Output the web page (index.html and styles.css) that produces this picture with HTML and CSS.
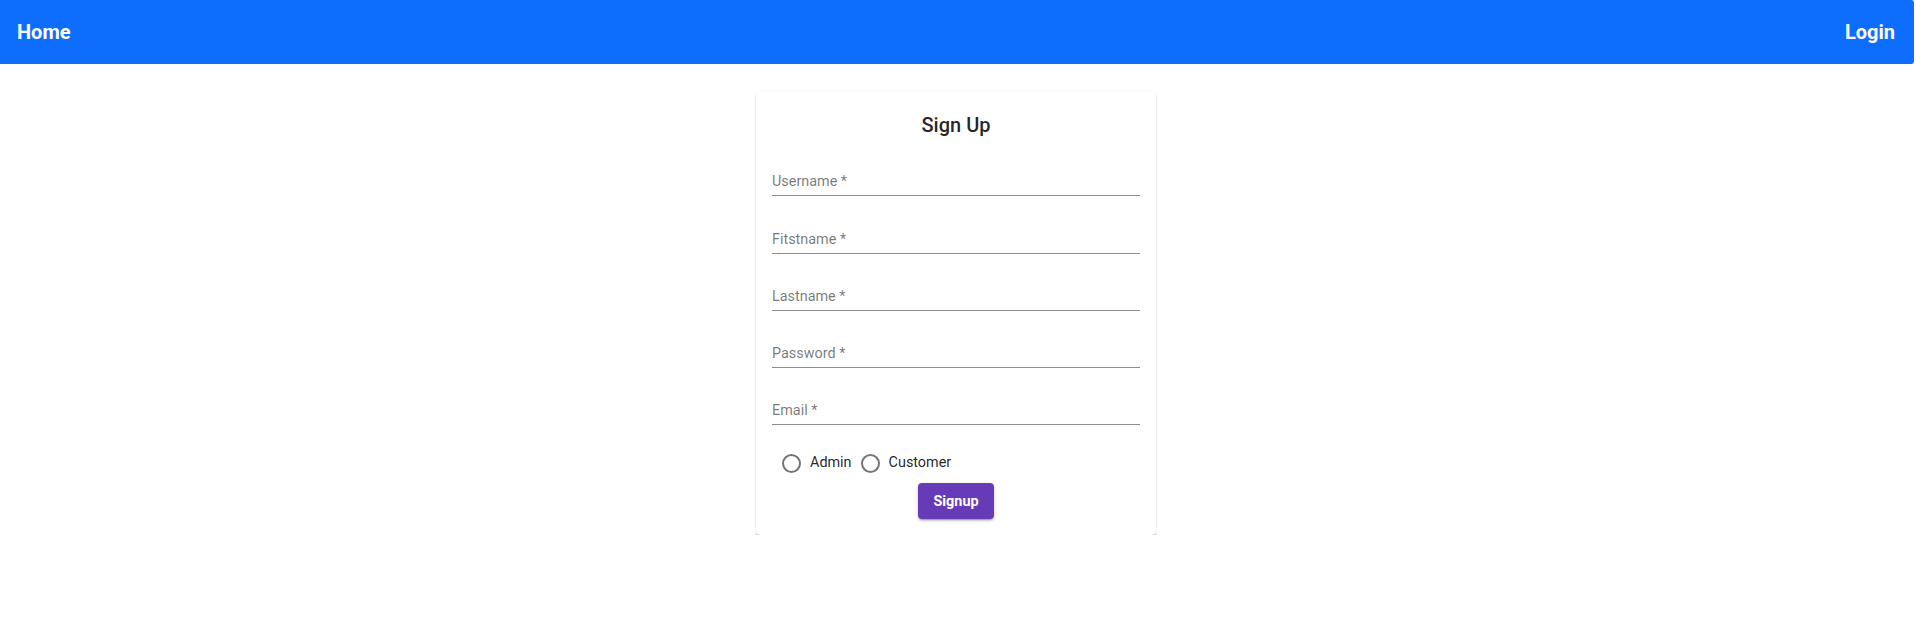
FILE: index.html
```html
<!DOCTYPE html>
<html lang="en">
<head>
<meta charset="utf-8">
<title>Sign Up</title>
<link rel="stylesheet" href="styles.css">
</head>
<body>
<nav class="navbar">
  <a class="nav-link" href="#">Home</a>
  <a class="nav-link nav-login" href="#">Login</a>
</nav>
<main class="page">
  <form class="card">
    <h2 class="card-title">Sign Up</h2>
    <div class="field"><label class="field-label">Username *</label></div>
    <div class="field"><label class="field-label">Fitstname *</label></div>
    <div class="field"><label class="field-label">Lastname *</label></div>
    <div class="field"><label class="field-label">Password *</label></div>
    <div class="field"><label class="field-label">Email *</label></div>
    <div class="radios">
      <label class="radio"><span class="radio-circle"></span><span class="radio-text">Admin</span></label>
      <label class="radio"><span class="radio-circle"></span><span class="radio-text">Customer</span></label>
    </div>
    <div class="actions">
      <button type="button" class="btn">Signup</button>
    </div>
  </form>
</main>
</body>
</html>
```

FILE: styles.css
```css
* { box-sizing: border-box; }

body {
  margin: 0;
  font-family: Roboto, "Liberation Sans", Arial, sans-serif;
  background: #fff;
  color: rgba(0, 0, 0, 0.87);
}

.navbar {
  height: 64px;
  margin-right: 2px;
  background: #0d6efd;
  border-radius: 0 3px 3px 0;
  display: flex;
  align-items: center;
  justify-content: space-between;
  padding: 0 19px 0 17px;
}

.nav-link {
  color: #fff;
  text-decoration: none;
  font-size: 20px;
  font-weight: 700;
  line-height: 24px;
}

.page {
  width: calc(100% - 4px);
  display: flex;
  justify-content: center;
  padding-top: 28px;
}

.card {
  width: 400px;
  background: #fff;
  border-radius: 4px;
  box-shadow: 0 2px 1px -1px rgba(0,0,0,0.25), 0 1px 1px 0 rgba(0,0,0,0.16), 0 1px 3px 0 rgba(0,0,0,0.12);
  padding: 21px 16px 16px;
}

.card-title {
  margin: 0 0 2px;
  text-align: center;
  font-size: 20px;
  font-weight: 500;
  line-height: 24px;
  color: rgba(0, 0, 0, 0.87);
}

.field {
  padding-top: 34.25px;
}

.field-label {
  display: block;
  font-size: 14.4px;
  line-height: 17px;
  padding-bottom: 5px;
  color: rgba(0, 0, 0, 0.54);
  border-bottom: 1px solid #8e8e8e;
}

.radios {
  display: flex;
  align-items: center;
  gap: 9px;
  height: 24px;
  margin-top: 26px;
  padding-left: 10px;
}

.radio {
  display: flex;
  align-items: center;
  gap: 9px;
}

.radio-circle {
  width: 19px;
  height: 19px;
  border: 2px solid #757575;
  border-radius: 50%;
}

.radio-text {
  font-size: 14.4px;
  line-height: 24px;
  color: rgba(0, 0, 0, 0.87);
}

.actions {
  display: flex;
  justify-content: center;
  margin-top: 8px;
}

.btn {
  height: 36px;
  padding: 0 15px;
  border: none;
  border-radius: 4px;
  background: #673ab7;
  color: #fff;
  font-family: Roboto, "Liberation Sans", Arial, sans-serif;
  font-size: 14.4px;
  font-weight: 700;
  box-shadow: 0 3px 1px -2px rgba(0,0,0,0.2), 0 2px 2px 0 rgba(0,0,0,0.14), 0 1px 5px 0 rgba(0,0,0,0.12);
}
```
